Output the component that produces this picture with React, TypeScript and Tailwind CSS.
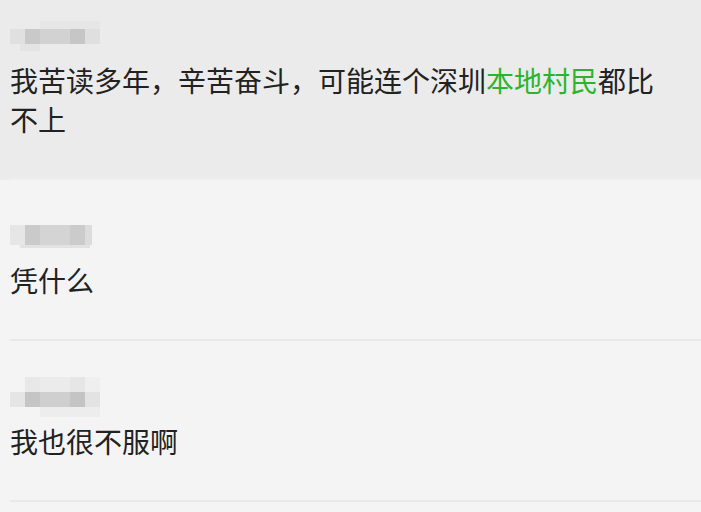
import React from "react";

type Cell = [number, string];
type Row = { h: number; cells: Cell[] };

// Pixelated (mosaic) nickname placeholder
function Mosaic({ rows }: { rows: Row[] }) {
  return (
    <div className="flex flex-col blur-[0.6px]">
      {rows.map((row, i) => (
        <div key={i} className="flex" style={{ height: row.h }}>
          {row.cells.map(([w, c], j) => (
            <div key={j} style={{ width: w, backgroundColor: c }} />
          ))}
        </div>
      ))}
    </div>
  );
}

type Comment = {
  name: Row[];
  body: React.ReactNode;
  active?: boolean;
};

const comments: Comment[] = [
  {
    active: true,
    name: [
      { h: 8, cells: [[30, "transparent"], [60, "#e6e6e6"]] },
      {
        h: 15,
        cells: [
          [15, "#e0e0e0"],
          [15, "#c9c9c9"],
          [30, "#d2d2d2"],
          [15, "#c6c6c6"],
          [15, "#dfdfdf"],
        ],
      },
      { h: 7, cells: [[10, "transparent"], [20, "#e4e4e4"]] },
    ],
    body: (
      <>
        我苦读多年，辛苦奋斗，可能连个深圳
        <span className="text-[#2cb52c]">本地村民</span>
        都比不上
      </>
    ),
  },
  {
    name: [
      {
        h: 20,
        cells: [
          [15, "#e6e6e6"],
          [15, "#cacaca"],
          [30, "#d4d4d4"],
          [15, "#cbcbcb"],
          [7, "#dcdcdc"],
        ],
      },
      { h: 3, cells: [[10, "transparent"], [70, "#e2e2e2"]] },
    ],
    body: "凭什么",
  },
  {
    name: [
      {
        h: 15,
        cells: [
          [15, "transparent"],
          [15, "#e8e8e8"],
          [30, "#ebebeb"],
          [15, "#e6e6e6"],
          [15, "#efefef"],
        ],
      },
      {
        h: 15,
        cells: [
          [15, "#e5e5e5"],
          [15, "#c5c5c5"],
          [30, "#cfcfcf"],
          [15, "#c4c4c4"],
          [15, "#e3e3e3"],
        ],
      },
      { h: 10, cells: [[30, "transparent"], [60, "#ededed"]] },
    ],
    body: "我也很不服啊",
  },
];

export default function App() {
  return (
    <div
      className="w-[701px] h-[512px] overflow-hidden bg-[#f4f4f4]"
      style={{ fontFamily: '"Noto Sans CJK SC", "Noto Sans", sans-serif' }}
    >
      <div className="-mt-[20px]">
        {comments.map((c, i) => (
          <div key={i} className={c.active ? "bg-[#ebebeb]" : "bg-[#f4f4f4]"}>
            <div className="pt-[41px] pb-[39px] pl-[10px] pr-[30px]">
              <div className="h-[30px] flex items-center">
                <Mosaic rows={c.name} />
              </div>
              <p className="mt-[10px] text-[28px] leading-[39px] text-[#222222]">
                {c.body}
              </p>
            </div>
            <div
              className={
                "ml-[10px] h-[2px] " +
                (c.active ? "bg-[#efefef]" : "bg-[#e8e8e8]")
              }
            />
          </div>
        ))}
      </div>
    </div>
  );
}
